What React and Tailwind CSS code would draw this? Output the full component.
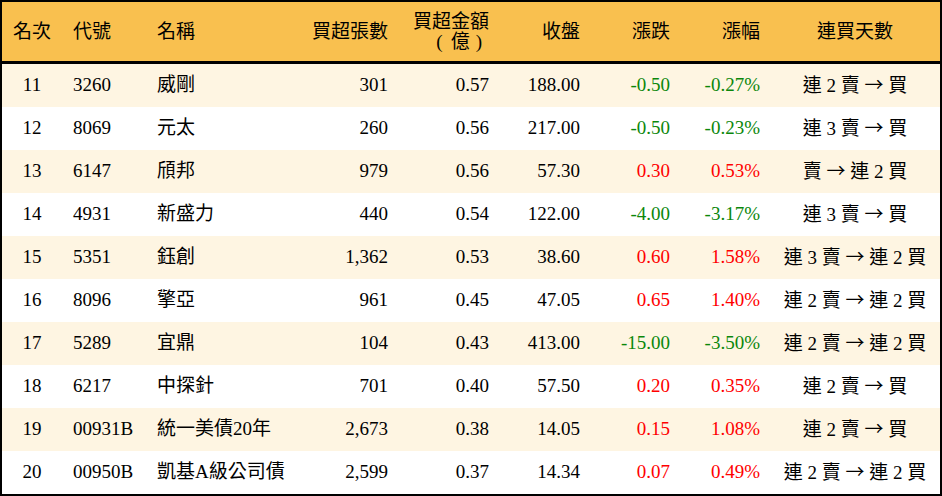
import React from "react";

const rows = [
  ["11", "3260", "威剛", "301", "0.57", "188.00", "-0.50", "-0.27%", "連 2 賣 → 買"],
  ["12", "8069", "元太", "260", "0.56", "217.00", "-0.50", "-0.23%", "連 3 賣 → 買"],
  ["13", "6147", "頎邦", "979", "0.56", "57.30", "0.30", "0.53%", "賣 → 連 2 買"],
  ["14", "4931", "新盛力", "440", "0.54", "122.00", "-4.00", "-3.17%", "連 3 賣 → 買"],
  ["15", "5351", "鈺創", "1,362", "0.53", "38.60", "0.60", "1.58%", "連 3 賣 → 連 2 買"],
  ["16", "8096", "擎亞", "961", "0.45", "47.05", "0.65", "1.40%", "連 2 賣 → 連 2 買"],
  ["17", "5289", "宜鼎", "104", "0.43", "413.00", "-15.00", "-3.50%", "連 2 賣 → 連 2 買"],
  ["18", "6217", "中探針", "701", "0.40", "57.50", "0.20", "0.35%", "連 2 賣 → 買"],
  ["19", "00931B", "統一美債20年", "2,673", "0.38", "14.05", "0.15", "1.08%", "連 2 賣 → 買"],
  ["20", "00950B", "凱基A級公司債", "2,599", "0.37", "14.34", "0.07", "0.49%", "連 2 賣 → 連 2 買"],
];

const grid = "grid grid-cols-[60px_85px_153px_98px_101px_91px_90px_90px_170px]";

function Days({ text }) {
  const [a, b] = text.split(" → ");
  return (
    <div className="text-center whitespace-pre">
      {a}{" "}
      <span className="font-['Noto_Sans_CJK_TC',sans-serif]">→</span>
      {" "}{b}
    </div>
  );
}

export default function App() {
  return (
    <div className="w-[942px] h-[496px] border-2 border-black bg-white text-black text-[19px] font-['Liberation_Serif','Noto_Sans_CJK_TC',serif] overflow-hidden">
      <div className={`${grid} h-[62px] bg-[#f9c04f] border-b-[3px] border-black items-center leading-[20px]`}>
        <div className="text-center">名次</div>
        <div className="pl-[11px]">代號</div>
        <div className="pl-[10px]">名稱</div>
        <div className="text-right pr-[10px]">買超張數</div>
        <div className="text-right pr-[10px]">
          <div>買超金額</div>
          <div className="pr-[7px]">
            <span>(</span>
            <span className="ml-[8px] mr-[6px]">億</span>
            <span>)</span>
          </div>
        </div>
        <div className="text-right pr-[10px]">收盤</div>
        <div className="text-right pr-[10px]">漲跌</div>
        <div className="text-right pr-[10px]">漲幅</div>
        <div className="text-center">連買天數</div>
      </div>
      {rows.map((r, i) => {
        const neg = r[6].startsWith("-");
        const color = neg ? "text-[#0b870b]" : "text-[#ff0000]";
        return (
          <div
            key={r[0]}
            className={`${grid} h-[43px] items-center ${i % 2 === 0 ? "bg-[#fef5e2]" : "bg-white"}`}
          >
            <div className="text-center">{r[0]}</div>
            <div className="pl-[11px]">{r[1]}</div>
            <div className="pl-[10px] whitespace-nowrap">{r[2]}</div>
            <div className="text-right pr-[10px]">{r[3]}</div>
            <div className="text-right pr-[10px]">{r[4]}</div>
            <div className="text-right pr-[10px]">{r[5]}</div>
            <div className={`text-right pr-[10px] ${color}`}>{r[6]}</div>
            <div className={`text-right pr-[10px] ${color}`}>{r[7]}</div>
            <Days text={r[8]} />
          </div>
        );
      })}
    </div>
  );
}
